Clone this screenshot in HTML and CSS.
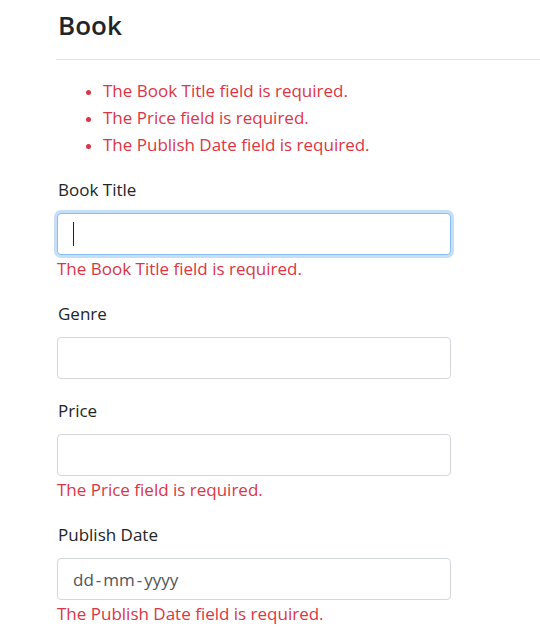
FILE: index.html
```html
<!DOCTYPE html>
<html>
<head>
<meta charset="utf-8">
<link rel="stylesheet" href="styles.css">
</head>
<body>
<div class="page">
  <h4 class="title">Book</h4>
  <hr class="rule">
  <ul class="summary">
    <li>The Book Title field is required.</li>
    <li>The Price field is required.</li>
    <li>The Publish Date field is required.</li>
  </ul>
  <div class="group">
    <label class="label">Book Title</label>
    <div class="control focused"><span class="caret"></span></div>
    <span class="error">The Book Title field is required.</span>
  </div>
  <div class="group">
    <label class="label">Genre</label>
    <div class="control"></div>
  </div>
  <div class="group">
    <label class="label">Price</label>
    <div class="control"></div>
    <span class="error">The Price field is required.</span>
  </div>
  <div class="group">
    <label class="label">Publish Date</label>
    <div class="control date"><span class="ph">dd</span><span class="dash">-</span><span class="ph">mm</span><span class="dash">-</span><span class="ph">yyyy</span></div>
    <span class="error">The Publish Date field is required.</span>
  </div>
</div>
</body>
</html>
```
FILE: styles.css
```css
html, body {
  margin: 0;
  padding: 0;
  background: #fff;
}
body {
  font-family: "Open Sans", "Noto Sans", sans-serif;
  font-size: 17px;
  color: #212529;
}
.page {
  padding: 9px 0 0 57px;
}
.title {
  margin: 0 0 17px 1px;
  font-size: 26px;
  line-height: 33px;
  font-weight: 600;
  color: #212529;
}
.rule {
  margin: 0 0 17px -1px;
  border: 0;
  border-top: 1px solid #e2e2e2;
  height: 0;
}
.summary {
  margin: 0 0 18px 0;
  padding-left: 46px;
  color: #dc3545;
  line-height: 27px;
}
.summary li::marker {
  font-size: 15px;
}
.group {
  margin-bottom: 18px;
  width: 394px;
}
.label {
  display: block;
  line-height: 27px;
  margin: 0 0 10px 1px;
}
.control {
  box-sizing: border-box;
  height: 42px;
  border: 1px solid #d3d7db;
  border-radius: 4px;
  background: #fff;
  padding: 0 15px;
  display: flex;
  align-items: center;
}
.control.focused {
  border-color: #86bdf5;
  box-shadow: 0 0 0 3px rgba(130, 182, 240, 0.45);
}
.caret {
  display: block;
  width: 1px;
  height: 24px;
  background: #222;
}
.date {
  color: #505558;
  gap: 0;
}
.dash {
  margin: 0 2px;
}
.error {
  display: block;
  color: #dc3545;
  line-height: 27px;
}
```
